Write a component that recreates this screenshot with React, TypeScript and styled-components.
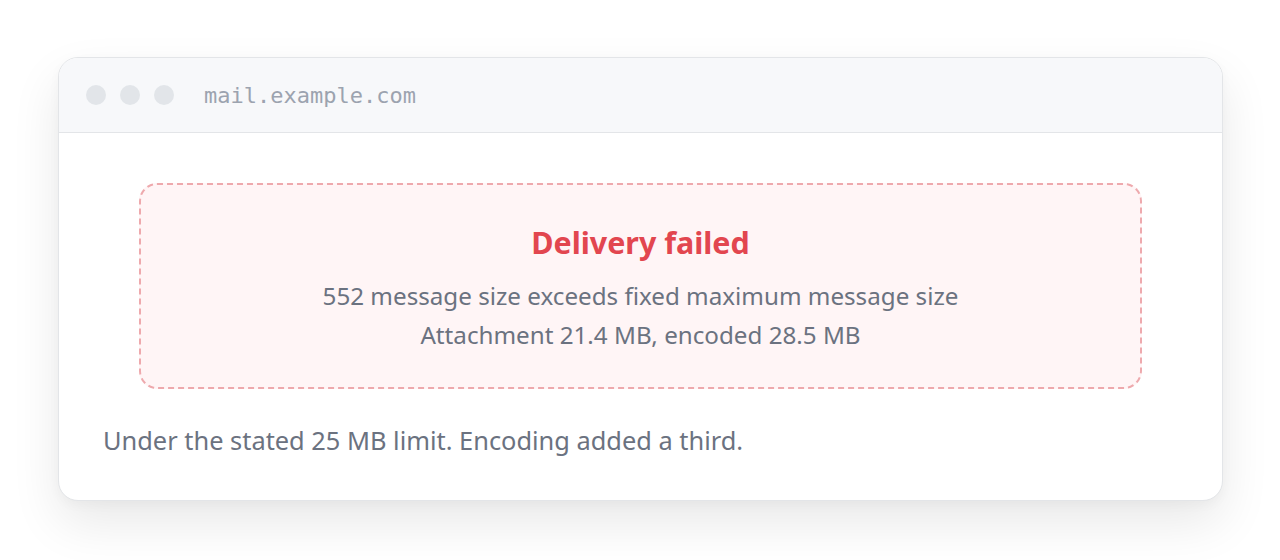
import React from "react";
import styled, { createGlobalStyle } from "styled-components";

const Global = createGlobalStyle`
  html, body { margin: 0; padding: 0; background: #ffffff; }
  body { font-family: "Noto Sans", "Open Sans", sans-serif; }
`;

const Page = styled.div`
  padding: 57px 57px 57px 58px;
  box-sizing: border-box;
  width: 1280px;
  height: 560px;
`;

const Window = styled.div`
  background: #ffffff;
  border: 1px solid #e3e5e8;
  border-radius: 20px;
  overflow: hidden;
  box-shadow: 0 22px 50px rgba(0, 0, 0, 0.09), 0 4px 12px rgba(0, 0, 0, 0.03);
`;

const TitleBar = styled.div`
  height: 74px;
  display: flex;
  align-items: center;
  padding-left: 27px;
  background: #f7f8fa;
  border-bottom: 1px solid #e3e5e8;
`;

const Dots = styled.div`
  display: flex;
  gap: 14px;
  margin-right: 30px;
`;

const Dot = styled.span`
  width: 20px;
  height: 20px;
  border-radius: 50%;
  background: #e2e5e9;
`;

const Address = styled.span`
  font-family: "DejaVu Sans Mono", "Liberation Mono", monospace;
  font-size: 22px;
  color: #9ca3af;
`;

const Content = styled.div`
  padding: 50px 44px 44px;
`;

const ErrorBox = styled.div`
  margin: 0 36px;
  padding: 39px 16px 33px;
  background: #fff5f6;
  border: 2px dashed #eea9ad;
  border-radius: 18px;
  text-align: center;
`;

const ErrorTitle = styled.div`
  font-size: 30.4px;
  line-height: 38px;
  font-weight: 700;
  color: #e2464f;
  margin-bottom: 14px;
`;

const ErrorLine = styled.div`
  font-size: 24.2px;
  line-height: 39px;
  color: #6b7280;
`;

const Note = styled.p`
  margin: 35px 0 0;
  font-size: 25.4px;
  line-height: 32px;
  color: #6b7280;
`;

export default function App() {
  return (
    <>
      <Global />
      <Page>
        <Window>
          <TitleBar>
            <Dots>
              <Dot />
              <Dot />
              <Dot />
            </Dots>
            <Address>mail.example.com</Address>
          </TitleBar>
          <Content>
            <ErrorBox>
              <ErrorTitle>Delivery failed</ErrorTitle>
              <ErrorLine>552 message size exceeds fixed maximum message size</ErrorLine>
              <ErrorLine>Attachment 21.4 MB, encoded 28.5 MB</ErrorLine>
            </ErrorBox>
            <Note>Under the stated 25 MB limit. Encoding added a third.</Note>
          </Content>
        </Window>
      </Page>
    </>
  );
}
